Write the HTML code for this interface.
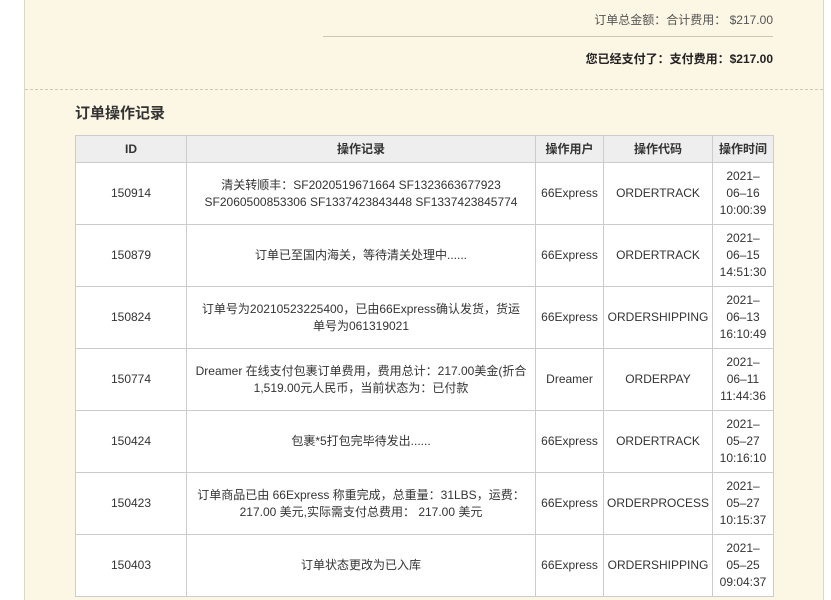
<!DOCTYPE html>
<html><head><meta charset="utf-8"><style>
html,body{margin:0;padding:0;background:#fff;width:831px;height:586px;overflow:hidden;font-family:"Liberation Sans","Noto Sans CJK SC",sans-serif;color:#333;}
.panel{position:absolute;left:24px;top:0;width:798px;height:600px;background:#fcf6e4;border-left:1px solid #ddd6c0;border-right:1px solid #ddd6c0;}
.t1{position:absolute;right:50px;top:11px;font-size:12px;color:#555;}
.hr{position:absolute;left:298px;width:450px;top:36px;border-top:1px solid #ccc6b4;}
.t2{position:absolute;right:50px;top:50px;font-size:12px;font-weight:bold;color:#222;}
.dash{position:absolute;left:0;right:0;top:89px;border-top:1px dashed #cfc8b4;}
h3{position:absolute;left:50px;top:102px;margin:0;font-size:15px;font-weight:bold;color:#333;}
table{position:absolute;left:50px;top:135px;width:698px;table-layout:fixed;border-collapse:collapse;background:#fff;font-size:12px;}
td,th{border:1px solid #ccc;text-align:center;line-height:17px;padding:0 2px;}
th{background:#eee;height:26px;font-weight:bold;}
td{height:61px;}
td.r{padding:0 6px;}
</style></head><body>
<div class="panel">
<div class="t1">订单总金额：合计费用：&nbsp;$217.00</div>
<div class="hr"></div>
<div class="t2">您已经支付了：支付费用：$217.00</div>
<div class="dash"></div>
<h3>订单操作记录</h3>
<table>
<colgroup><col style="width:111px"><col style="width:349px"><col style="width:68px"><col style="width:109px"><col style="width:61px"></colgroup>
<tr><th>ID</th><th>操作记录</th><th>操作用户</th><th>操作代码</th><th>操作时间</th></tr>
<tr><td>150914</td><td class="r">清关转顺丰：SF2020519671664 SF1323663677923 SF2060500853306 SF1337423843448 SF1337423845774</td><td>66Express</td><td>ORDERTRACK</td><td>2021–<br>06–16<br>10:00:39</td></tr>
<tr><td>150879</td><td class="r">订单已至国内海关，等待清关处理中......</td><td>66Express</td><td>ORDERTRACK</td><td>2021–<br>06–15<br>14:51:30</td></tr>
<tr><td>150824</td><td class="r">订单号为20210523225400，已由66Express确认发货，货运<br>单号为061319021</td><td>66Express</td><td>ORDERSHIPPING</td><td>2021–<br>06–13<br>16:10:49</td></tr>
<tr><td>150774</td><td class="r">Dreamer 在线支付包裹订单费用，费用总计：217.00美金(折合1,519.00元人民币，当前状态为：已付款</td><td>Dreamer</td><td>ORDERPAY</td><td>2021–<br>06–11<br>11:44:36</td></tr>
<tr><td>150424</td><td class="r">包裹*5打包完毕待发出......</td><td>66Express</td><td>ORDERTRACK</td><td>2021–<br>05–27<br>10:16:10</td></tr>
<tr><td>150423</td><td class="r">订单商品已由 66Express 称重完成，总重量：31LBS，运费：217.00 美元,实际需支付总费用： 217.00 美元</td><td>66Express</td><td>ORDERPROCESS</td><td>2021–<br>05–27<br>10:15:37</td></tr>
<tr><td>150403</td><td class="r">订单状态更改为已入库</td><td>66Express</td><td>ORDERSHIPPING</td><td>2021–<br>05–25<br>09:04:37</td></tr>
</table>
</div>
</body></html>
